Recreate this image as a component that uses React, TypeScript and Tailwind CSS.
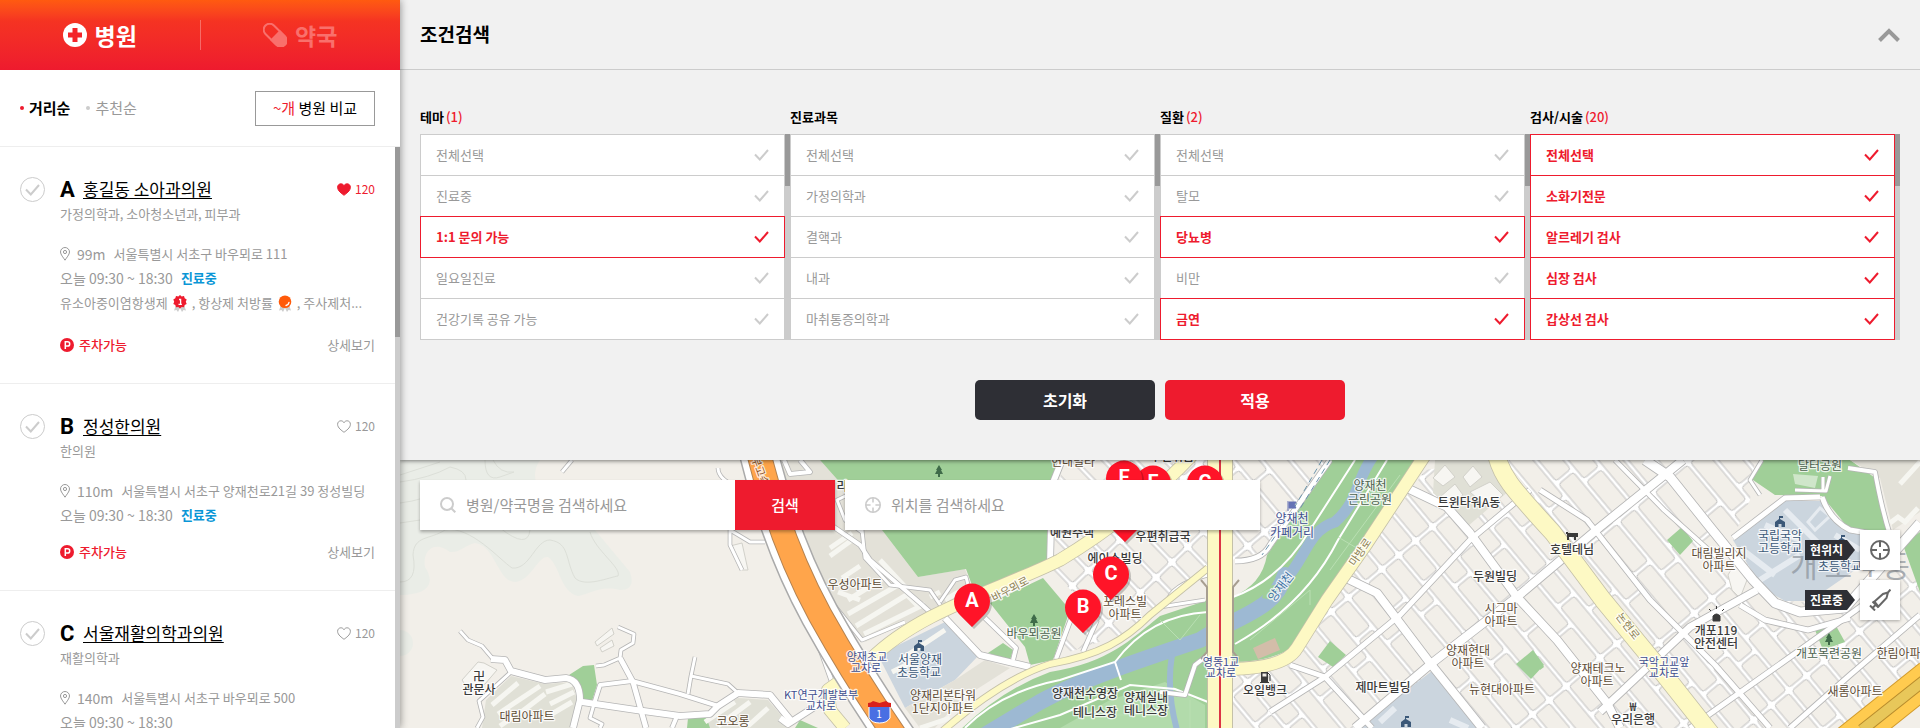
import { useState } from 'react';
import type { ReactNode } from 'react';

type Hospital = {
  letter: string;
  name: string;
  departments: string;
  distance: string;
  address: string;
  open: boolean;
  liked: boolean;
  awards: boolean;
};

const hospitals: Hospital[] = [
  { letter: 'A', name: '홍길동 소아과의원', departments: '가정의학과, 소아청소년과, 피부과', distance: '99m', address: '서울특별시 서초구 바우뫼로 111', open: true, liked: true, awards: true },
  { letter: 'B', name: '정성한의원', departments: '한의원', distance: '110m', address: '서울특별시 서초구 양재천로21길 39 정성빌딩', open: true, liked: false, awards: false },
  { letter: 'C', name: '서울재활의학과의원', departments: '재활의학과', distance: '140m', address: '서울특별시 서초구 바우뫼로 500', open: false, liked: false, awards: false },
];

type Filter = { title: string; count?: number; options: string[]; selected: number[] };

const filters: Filter[] = [
  { title: '테마', count: 1, options: ['전체선택', '진료중', '1:1 문의 가능', '일요일진료', '건강기록 공유 가능'], selected: [2] },
  { title: '진료과목', options: ['전체선택', '가정의학과', '결핵과', '내과', '마취통증의학과'], selected: [] },
  { title: '질환', count: 2, options: ['전체선택', '탈모', '당뇨병', '비만', '금연'], selected: [2, 4] },
  { title: '검사/시술', count: 20, options: ['전체선택', '소화기전문', '알르레기 검사', '심장 검사', '갑상선 검사'], selected: [0, 1, 2, 3, 4] },
];

function Check({ className }: { className: string }) {
  return (
    <svg viewBox="0 0 15 12" className={className} fill="none" stroke="currentColor" strokeWidth="2" aria-hidden="true">
      <path d="M1 5.5 5.8 10.5 14 1" />
    </svg>
  );
}

function Target({ className }: { className: string }) {
  return (
    <svg viewBox="0 0 20 20" className={className} fill="none" stroke="currentColor" strokeWidth="2" aria-hidden="true">
      <circle cx="10" cy="10" r="9" />
      <path d="M10 1v6M10 13v6M1 10h6M13 10h6" />
    </svg>
  );
}

function Heart({ filled }: { filled: boolean }) {
  return (
    <svg viewBox="0 0 14 13" className="h-[13px] w-[14px]" fill={filled ? 'currentColor' : 'none'} stroke="currentColor" strokeWidth="1" aria-hidden="true">
      <path d="M7 12.3C5 10.700 .6 8 .6 4.300.6 2.200 2.100.8 3.900.8 5.200.8 6.400 1.500 7 2.700 7.600 1.500 8.800.8 10.100.8c1.800 0 3.300 1.400 3.300 3.500C13.400 8 9 10.700 7 12.300Z" />
    </svg>
  );
}

function GoldMedal() {
  return (
    <svg viewBox="0 0 14 17" className="h-[17px] w-[14px]" aria-hidden="true">
      <path d="M3 10 1 15.500l2.500-.5L5 17l2-4 2 4 1.500-2 2.500.5L11 10Z" fill="#ccc" />
      <path d="m7 0 1.700 1.500 2.300-.4.7 2.200 2 1.200-.9 2.200.9 2.200-2 1.200-.7 2.200-2.300-.4L7 13.400l-1.700-1.500-2.300.4-.7-2.200-2-1.200.9-2.200-.9-2.200 2-1.200.7-2.200 2.300.4Z" fill="#ee1b2e" />
      <path d="M6 4.500h1.600v4.300M5.500 9.300h3.400" stroke="#fff" strokeWidth="1.300" fill="none" />
    </svg>
  );
}

function BronzeMedal() {
  return (
    <svg viewBox="0 0 14 17" className="h-[17px] w-[14px]" aria-hidden="true">
      <path d="M3 10 1 15.500l2.500-.5L5 17l2-4 2 4 1.500-2 2.500.5L11 10Z" fill="#ccc" />
      <circle cx="7" cy="6.800" r="6.300" fill="#ff5a0a" />
      <path d="M11 7.500c-.3 1.500-1.400 2.700-3 3" stroke="#fff" strokeWidth="1.300" fill="none" strokeLinecap="round" />
    </svg>
  );
}

function HospitalItem({ item }: { item: Hospital }) {
  return (
    <li className="flex border-b border-[#eee] pt-[27px] pr-5 pb-7 pl-5">
      <label className="relative mt-[3px] flex h-[25px] w-[25px] shrink-0 items-center justify-center rounded-full border border-[#ccc] text-[#ccc]">
        <input type="checkbox" aria-label={`${item.name} 선택`} className="absolute inset-0 cursor-pointer appearance-none rounded-full" />
        <Check className="h-[12px] w-[15px]" />
      </label>
      <div className="ml-[15px] min-w-0 flex-1 text-[13px] whitespace-nowrap text-[#999]">
        <div className="flex h-[30px] items-center">
          <span className="w-[23px] font-['Roboto','Noto_Sans_CJK_KR',sans-serif] text-[22px] font-bold text-black">{item.letter}</span>
          <a href="#detail" className="text-[17px] text-black underline decoration-1 underline-offset-2">{item.name}</a>
          <button type="button" className={`ml-auto flex items-center gap-1 text-[12px] ${item.liked ? 'text-[#ee1b2e]' : 'text-[#999]'}`}>
            <Heart filled={item.liked} />120
          </button>
        </div>
        <p className="h-[38px] leading-5">{item.departments}</p>
        <p className="flex h-6 items-center">
          <svg viewBox="0 0 10 14" className="mr-[7px] h-[14px] w-[10px] shrink-0" fill="none" stroke="#999" aria-hidden="true">
            <path d="M5 13.200C3.500 10.800.5 7.500.5 5a4.500 4.500 0 0 1 9 0c0 2.500-3 5.800-4.500 8.200Z" />
            <circle cx="5" cy="5" r="1.600" />
          </svg>
          <span className="text-[14px]">{item.distance}</span>
          <span className="ml-2">{item.address}</span>
        </p>
        <p className="flex h-6 items-center">
          <span className="text-[14px]">오늘 09:30 ~ 18:30</span>
          {item.open && <strong className="ml-2 font-bold text-[#0a96d6]">진료중</strong>}
        </p>
        {item.awards && (
          <p className="flex h-[30px] items-center pb-1">
            유소아중이염항생제<span className="mx-[5px]"><GoldMedal /></span>, 항상제 처방률<span className="mx-[5px]"><BronzeMedal /></span>, 주사제처...
          </p>
        )}
        {item.open && (
          <div className="mt-[15px] flex h-5 items-center">
            <svg viewBox="0 0 14 14" className="mr-[5px] h-[14px] w-[14px]" aria-hidden="true">
              <circle cx="7" cy="7" r="7" fill="#ee1b2e" />
              <path d="M5.300 11V3.800h2.300a2 2 0 0 1 0 4.200H5.300" fill="none" stroke="#fff" strokeWidth="1.500" />
            </svg>
            <span className="font-medium text-[#ee1b2e]">주차가능</span>
            <a href="#detail" className="ml-auto">상세보기</a>
          </div>
        )}
      </div>
    </li>
  );
}

function Sidebar() {
  return (
    <aside className="relative z-20 flex w-[400px] shrink-0 flex-col bg-white shadow-[0_0_8px_rgba(0,0,0,0.45)]">
      <nav className="flex h-[70px] shrink-0 items-center bg-linear-to-b from-[#ff5a10] via-[#f53322] via-30% to-[#ee1a2e] text-[23px] leading-8 font-bold">
        <a href="#hospital" className="flex flex-1 items-center justify-center gap-2 text-white">
          <svg viewBox="0 0 24 24" className="h-6 w-6" aria-hidden="true">
            <circle cx="12" cy="12" r="12" fill="#fff" />
            <path d="M9.500 5h5v4.500H19v5h-4.500V19h-5v-4.500H5v-5h4.500Z" fill="#f3242a" />
          </svg>
          병원
        </a>
        <span className="h-[30px] w-px bg-white/30" />
        <a href="#pharmacy" className="flex flex-1 items-center justify-center gap-2 text-[#f9706c]">
          <svg viewBox="0 0 24 24" className="h-6 w-6" aria-hidden="true">
            <g transform="rotate(45 12 12)">
              <rect x="-1.500" y="6" width="27" height="12" rx="6" fill="none" stroke="#f9706c" strokeWidth="2" />
              <path d="M12 5h8a7 7 0 0 1 0 14h-8Z" fill="#f9706c" />
            </g>
          </svg>
          약국
        </a>
      </nav>
      <div className="flex h-[77px] shrink-0 items-center border-b border-[#eee] pr-[25px] pl-5 text-[15px]">
        <button type="button" className="flex items-center gap-[5px] font-bold text-black"><i className="h-1 w-1 rounded-full bg-[#ee1b2e]" />거리순</button>
        <button type="button" className="ml-4 flex items-center gap-[5px] text-[#999]"><i className="h-1 w-1 rounded-full bg-[#ccc]" />추천순</button>
        <button type="button" className="ml-auto h-[35px] w-[120px] border border-[#999] text-black"><span className="text-[#ee1b2e]">~개</span> 병원 비교</button>
      </div>
      <div className="flex min-h-0 flex-1">
        <ul className="min-w-0 flex-1 overflow-hidden">
          {hospitals.map((h) => <HospitalItem key={h.letter} item={h} />)}
        </ul>
        <div className="w-[5px] bg-[#ccc]"><div className="h-[190px] bg-[#999]" /></div>
      </div>
    </aside>
  );
}

function FilterColumn({ filter }: { filter: Filter }) {
  const [selected, setSelected] = useState(filter.selected);
  const toggle = (i: number) => setSelected((s) => (s.includes(i) ? s.filter((n) => n !== i) : [...s, i]));
  return (
    <fieldset className="min-w-0 flex-1">
      <legend className="mb-2 flex h-[19px] gap-[2px] text-[13px] leading-[19px] font-bold text-black">
        {filter.title}{filter.count && <span className="font-medium text-[#ee1b2e]">({filter.count})</span>}
      </legend>
      <div className="flex">
        <div className="flex-1 pt-px">
          {filter.options.map((option, i) => {
            const on = selected.includes(i);
            return (
              <label key={option} className={`relative -mt-px flex h-[42px] cursor-pointer items-center justify-between border bg-white px-[15px] text-[13px] ${on ? 'z-10 border-[#ee1b2e] font-bold text-[#ee1b2e]' : 'border-[#ccc] text-[#999]'}`}>
                <input type="checkbox" checked={on} onChange={() => toggle(i)} className="sr-only" />
                {option}
                <Check className={`h-[12px] w-[15px] ${on ? 'text-[#ee1b2e]' : 'text-[#ccc]'}`} />
              </label>
            );
          })}
        </div>
        <div className="w-[5px] bg-[#ccc]"><div className="h-[52px] bg-[#999]" /></div>
      </div>
    </fieldset>
  );
}

function ConditionPanel() {
  return (
    <section className="relative z-10 shrink-0 bg-[#f1f1f1] shadow-[0_1px_4px_rgba(0,0,0,0.5)]">
      <header className="flex h-[70px] items-center justify-between border-b border-[#ccc] px-5">
        <h1 className="text-[19px] font-bold text-black">조건검색</h1>
        <button type="button" aria-label="접기">
          <svg viewBox="0 0 22 14" className="h-[14px] w-[22px]" fill="none" stroke="#999" strokeWidth="4" aria-hidden="true"><path d="M1.500 12.500 11 3l9.500 9.500" /></svg>
        </button>
      </header>
      <div className="flex px-5 pt-[37px]">
        {filters.map((f) => <FilterColumn key={f.title} filter={f} />)}
      </div>
      <div className="flex justify-center gap-[10px] pt-10 pb-10 text-[16px] font-bold text-white">
        <button type="reset" className="h-10 w-[180px] rounded-[5px] bg-[#2e2f35]">초기화</button>
        <button type="submit" className="h-10 w-[180px] rounded-[5px] bg-[#ee1b2e]">적용</button>
      </div>
    </section>
  );
}

const streets: [string, number][] = [
  ['M460 631 468 640 482 646 493 659', 3],
  ['M491 659 505 660 511 671 545 680 566 678Q580 680 580 700L573 728', 6],
  ['M511 672 479 701 483 717 477 728', 3],
  ['M596 666 604 665 620 658 621 650 633 643 634 634 618 627', 3],
  ['M620 658 633 682 646 728', 5],
  ['M594 704 600 685 632 681 680 694 718 706', 4],
  ['M582 702 636 710 680 716 710 714 718 706 738 693 770 695 792 722', 6],
  ['M688 694 691 676 695 657', 3],
  ['M691 676 728 684 738 693', 3],
  ['M594 704 590 718 602 724 600 728', 3],
  ['M677 716 672 728', 4],
  ['M572 460 562 472', 3],
  ['M718 468Q718 480 740 488M730 530 750 542 765 542M730 530 730 545 742 570', 3],
  ['M780 560 810 620 832 682 832 692', 4],
  ['M780 718 788 724 830 697', 6],
  ['M800 460 810 472 790 474 784 460M780 490 860 545 870 560 920 603 930 612', 4],
  ['M862 530 865 558 890 585 930 590 945 612', 3],
  ['M862 532 845 520 837 500 858 490', 3],
  ['M830 600 862 640 905 622', 3],
  ['M940 602 955 580 966 577 972 600', 3],
  ['M1062 460 1052 485 1050 565', 6],
  ['M945 618 980 655 1030 667', 6],
  ['M985 618 1016 648 1013 660', 4],
  ['M1056 659 1078 600M1083 652 1097 620', 4],
  ['M1235 561Q1262 561 1270 545L1330 460', 5],
  ['M1160 607 1205 600M1167 603Q1170 585 1208 575', 3],
  ['M1160 692 1185 695 1195 665 1208 655', 4],
  ['M1409 489 1447 507 1470 533 1517 597 1557 640 1607 703 1620 728', 8],
  ['M1348 579 1377 593 1430 663 1482 728', 8],
  ['M1355 728 1432 663 1517 597 1600 527 1667 473 1683 460', 8],
  ['M1645 460 1670 477 1710 527 1753 580 1775 603 1800 612 1845 608 1920 523', 9],
  ['M1600 712 1690 627 1757 590', 7],
  ['M1540 490 1587 520 1650 600 1715 665 1770 728', 5],
  ['M1615 460 1664 510 1720 560', 4],
  ['M1290 665 1325 677 1372 728', 5],
  ['M1270 712 1325 677 1400 615 1470 540 1530 490', 5],
  ['M1690 728 1800 650 1870 600', 5],
  ['M1790 728 1850 675 1920 615', 5],
  ['M1820 497 1785 498 1733 538', 5],
  ['M1822 497Q1830 520 1850 530L1890 537', 5],
  ['M1760 495 1750 480 1762 460', 3],
  ['M1848 468 1875 472Q1882 510 1890 535', 4],
  ['M1795 490 1826 491 1830 476M1823 477V490', 3],
  ['M1740 605 1765 620 1808 630 1850 618', 5],
];

const avenues: [string, number][] = [
  ['M1195 452C1160 490 1110 530 1060 560 1000 590 920 610 870 660L828 690 830 710 845 728', 12],
  ['M938 735Q1000 680 1050 664C1100 655 1125 640 1150 615L1208 568', 6],
  ['M1427 452 1367 543 1327 600 1297 648Q1285 668 1232 669', 12],
  ['M1496 452C1500 475 1512 488 1553 533L1603 600 1663 673 1712 735', 17],
];

type Label = [string, number, number, string, number?, number?];
const ink = '#3a3a3a';
const brown = '#5e4c35';
const blue = '#3f4f8f';
const navy = '#3b5878';
const park = '#4d6350';

const labels: Label[] = [
  ['卍', 479, 677, ink], ['관문사', 479, 690, ink], ['대림아파트', 527, 717, brown], ['코오롱', 733, 722, brown],
  ['KT연구개발본부', 821, 695, blue, 11], ['교차로', 821, 706, blue, 11], ['우성아파트', 855, 585, brown],
  ['양재초교', 867, 657, blue, 11], ['교차로', 866, 668, blue, 11], ['서울양재', 920, 660, navy], ['초등학교', 919, 673, navy],
  ['양재리본타워', 943, 696, brown], ['1단지아파트', 943, 709, brown], ['바우뫼공원', 1034, 634, park],
  ['현대빌라', 1073, 462, brown], ['우편취급', 1172, 457, ink], ['예원주택', 1072, 533, ink], ['우편취급국', 1163, 537, ink], ['에이스빌딩', 1115, 559, ink],
  ['포레스빌', 1125, 602, brown], ['아파트', 1125, 615, brown], ['양재천수영장', 1085, 694, ink], ['테니스장', 1095, 713, ink],
  ['양재실내', 1146, 698, ink], ['테니스장', 1146, 711, ink], ['영동1교', 1221, 662, blue, 11], ['교차로', 1221, 673, blue, 11],
  ['오일뱅크', 1265, 691, ink], ['양재천', 1370, 486, park], ['근린공원', 1370, 500, park], ['양재천', 1292, 519, blue], ['카페거리', 1292, 533, blue],
  ['양재천', 1281, 587, '#3f73a4', 12, -52], ['마방로', 1360, 552, '#8d8152', 11, -56], ['바우뫼로', 1010, 589, '#8d8152', 11, -28],
  ['트윈타워A동', 1469, 503, ink], ['두원빌딩', 1495, 577, ink], ['시그마', 1501, 609, brown], ['아파트', 1501, 622, brown],
  ['양재현대', 1468, 651, brown], ['아파트', 1468, 664, brown], ['뉴현대아파트', 1502, 690, brown], ['제마트빌딩', 1383, 688, ink],
  ['호텔데님', 1572, 550, ink], ['대림빌리지', 1719, 554, brown], ['아파트', 1719, 567, brown], ['국립국악', 1780, 536, navy], ['고등학교', 1780, 549, navy],
  ['달터공원', 1820, 466, park], ['개포119', 1716, 631, ink], ['안전센터', 1716, 644, ink], ['국악고교앞', 1664, 662, blue, 11], ['교차로', 1664, 673, blue, 11],
  ['양재테크노', 1598, 669, brown], ['아파트', 1597, 682, brown], ['우리은행', 1633, 720, ink], ['₩', 1633, 707, ink],
  ['개포목련공원', 1829, 654, park], ['한림아파트', 1904, 654, brown], ['새롬아파트', 1855, 692, brown], ['초등학교', 1840, 567, navy],
  ['논현로', 1628, 626, '#8d8152', 11, 52], ['경부고속도로', 762, 476, '#8a4d1c', 11, 70], ['리', 842, 487, ink],
];

const pins: [string, number, number][] = [
  ['D', 1125, 516], ['F', 1153, 483], ['E', 1124, 478], ['G', 1205, 483], ['A', 972, 601], ['C', 1111, 574], ['B', 1083, 607],
];

const apartments = [
  'M492 705 518 683M498 714 540 686M516 716 545 694M546 692 572 684M550 704 574 692M545 718 572 702M500 726 514 716',
  'M705 722 735 702M718 726 750 702M748 726 768 708',
  'M830 556 852 540M830 548 852 533M842 578 860 566M838 592 860 600M848 600 890 574M848 614 900 584M856 626 908 594M864 634 925 604M880 560 908 590M906 594 918 606M962 590 945 600M930 597 940 592',
  'M900 660 945 630M892 672 912 662',
  'M920 728 950 718M940 690 965 700M960 690 978 705',
];

function Tree({ x, y }: { x: number; y: number }) {
  return <path transform={`translate(${x} ${y})`} d="M0-6 3-1H2L4 3H1V6H-1V3H-4L-2-1H-3Z" fill="#3f6b49" />;
}

function School({ x, y }: { x: number; y: number }) {
  return <path transform={`translate(${x} ${y})`} d="M-5 5V0L-1-3V-6H3V-4H0V-3L5 0V5H1.500V2H-1.500V5Z" fill={navy} />;
}

function MapCanvas() {
  return (
    <svg viewBox="400 460 1520 268" preserveAspectRatio="xMinYMin slice" className="absolute inset-0 h-full w-full" role="img" aria-label="지도">
      <defs>
        <pattern id="blocksEast" width="104" height="44" patternUnits="userSpaceOnUse" patternTransform="translate(1432 663) rotate(50)">
          <rect width="104" height="44" fill="#fff" />
          <g fill="#f2efe9" stroke="#c2c2c2">
            <rect x="2" y="2" width="56" height="18" rx="3" />
            <rect x="62" y="2" width="40" height="18" rx="3" />
            <rect x="2" y="24" width="34" height="18" rx="3" />
            <rect x="40" y="24" width="62" height="18" rx="3" />
          </g>
        </pattern>
        <pattern id="blocksFar" width="120" height="46" patternUnits="userSpaceOnUse" patternTransform="translate(1670 477) rotate(50)">
          <rect width="120" height="46" fill="#fff" />
          <g fill="#f2efe9" stroke="#c2c2c2">
            <rect x="2" y="2" width="64" height="19" rx="3" />
            <rect x="70" y="2" width="48" height="19" rx="3" />
            <rect x="2" y="25" width="48" height="19" rx="3" />
            <rect x="54" y="25" width="64" height="19" rx="3" />
          </g>
        </pattern>
        <pattern id="blocksWest" width="52" height="22" patternUnits="userSpaceOnUse" patternTransform="translate(1120 540) rotate(46)">
          <rect width="52" height="22" fill="#fff" />
          <rect x="2" y="2" width="48" height="18" rx="3" fill="#f2efe9" stroke="#c2c2c2" />
        </pattern>
      </defs>
      <rect x="400" y="460" width="1520" height="268" fill="#f2efe9" />
      <path d="M400 460H540Q530 475 540 490L595 530 630 572Q636 590 620 590C600 585 590 594 578 596 560 592 560 565 548 557 538 555 532 580 515 582 498 582 495 545 475 543 465 545 460 553 450 552 435 540 422 550 425 567 435 582 430 595 400 595Z" fill="#eaede7" />
      <circle cx="400" cy="643" r="13" fill="#eaede7" />
      <g fill="none" stroke="#dcdfd8">
        <path d="M400 475 440 462M400 482Q430 478 450 467 466 470 466 480M400 523 420 520M400 503Q425 500 440 490M485 460Q485 482 500 477L514 472M493 460Q500 474 514 472M400 582Q418 582 413 555C414 535 430 540 445 530 470 525 500 560 512 568 530 570 535 540 550 540 570 543 565 560 575 578 585 588 610 577 618 576 622 568 595 550 590 532" />
        <path d="M500 528Q528 550 530 530" />
      </g>

      <path d="M1232 460H1330L1268 550 1232 560ZM1425 470 1495 460 1600 600 1700 728H1232V675L1290 665 1345 585Z" fill="url(#blocksEast)" />
      <path d="M1505 460H1755L1750 500 1733 538 1770 600 1850 605 1920 540V670L1850 728H1715Z" fill="url(#blocksFar)" />
      <path d="M1062 460H1208V568L1120 635 1060 655 1080 600 1052 570Z" fill="url(#blocksWest)" />

      <path d="M760 460H820L882 530 918 577 965 569 975 595 940 608 865 642 832 600 800 540Z" fill="#e3e1d8" />
      <path d="M820 460H1060L1050 485V562L1020 575 976 596 966 569 918 577 882 530Z" fill="#a0cf98" />
      <path d="M990 603 1043 578 1070 610 1053 660 1030 665 1025 647Z" fill="#a0cf98" />
      <path d="M988 653 1003 643 1013 650 1010 660Z" fill="#a0cf98" />
      <path d="M569 675 583 666 594 665 597 685 592 701 582 700 579 686Z" fill="#a0cf98" />
      <path d="M511 676 545 684 572 682 577 700 570 728H482L486 700Z" fill="#e0e0d6" />
      <path d="M690 728 738 698 768 700 787 722V728Z" fill="#e0e0d6" />
      <path d="M688 718 706 716 710 728H687ZM795 728 800 720 818 728Z" fill="#a0cf98" />
      <path d="M945 622 980 654 955 680 905 708 878 655Z" fill="#cbd5de" />
      <path d="M905 708 955 680 985 660 1010 668 960 700 935 728H920Z" fill="#e3e1d8" />
      <path d="M955 735Q1000 690 1050 672C1110 662 1130 640 1160 616L1208 600V735Z" fill="#a0cf98" />
      <path d="M1332 460H1417L1343 580 1293 647Q1270 662 1232 662V597Q1262 585 1267 555Z" fill="#a0cf98" />
      <path d="M1110 700 1165 682 1205 705V728H1060Z" fill="#b2dbab" />
      <g fill="none" stroke="#9db9d3" strokeLinecap="round" strokeLinejoin="round">
        <path d="M1374 455C1355 480 1360 500 1335 522 1308 530 1305 560 1285 580" strokeWidth="11" />
        <path d="M1285 575C1275 610 1240 615 1200 640 1140 660 1080 680 1040 702L985 735" strokeWidth="16" />
        <path d="M1172 655Q1166 690 1177 730" strokeWidth="6" />
      </g>
      <path d="M1262 598Q1265 583 1280 585L1272 600Z" fill="#a0cf98" />
      <g fill="none" stroke="#fff" strokeWidth="2">
        <path d="M1355 460 1310 530Q1280 580 1233 597M1387 460 1338 540Q1305 605 1235 644" />
        <path d="M965 728Q1000 692 1060 680L1115 662Q1150 615 1208 612M1115 662 1121 680M1000 732 1060 715 1130 685 1175 689 1208 702" />
      </g>
      <path d="M1253 648 1275 638 1280 650 1258 659Z" fill="#d3bda9" />
      <g fill="none" stroke="#b9dfb2">
        <path d="M1400 475 1330 570M1338 537 1360 550M1310 605V590L1250 640M1160 620 1180 640 1200 615M1080 715H1160M1190 700V728" />
      </g>

      <path d="M1435 460H1490L1510 490 1468 526 1447 505 1433 493Z" fill="#e0e0d6" />
      <g fill="#f7f6f2" stroke="#d2d1ca">
        <path d="m1433 478 12-13 10 12-12 9ZM1463 477 1473 466 1482 477 1470 487ZM1470 492 1490 482 1503 495 1488 508ZM1440 497 1455 484 1463 495 1449 505Z" />
        <path d="M462 680 478 662 484 663 497 670 485 684 470 692ZM595 642 612 628 614 634 597 646ZM600 648 612 640 614 646 602 652ZM730 546 742 543 748 570 742 570Z" />
        <path d="M1728 575 1735 563 1747 580 1740 598 1732 590Z" />
      </g>
      <path d="M1357 728 1432 671 1478 728Z" fill="#cbd5de" />
      <path d="M1733 540 1785 501H1823L1833 520 1850 533 1890 540 1855 570 1810 601H1785L1762 588Z" fill="#cbd5de" />
      <path d="M1762 460H1850L1878 480 1890 540 1850 530 1822 496 1775 495 1750 478Z" fill="#a0cf98" />
      <path d="M1850 460H1920V512L1893 530 1880 478Z" fill="#e3e1d8" />
      <path d="M1903 545 1920 532V592ZM1667 540 1682 527 1693 541 1680 555ZM1318 657 1330 641 1346 655 1333 667ZM1516 664 1533 650 1544 665 1531 679ZM1815 630 1835 624 1845 642 1823 650ZM1540 660 1544 667 1540 670Z" fill="#a0cf98" />
      <path d="M1793 474 1818 476 1815 488 1795 484Z" fill="#cfe6ca" />
      <g fill="none" stroke="#e6ebf0" strokeWidth="6">
        <path d="M1740 548 1775 575M1765 525 1800 540M1785 510 1820 545M1760 580 1800 555M1835 535 1860 550M1380 722 1395 708M1450 720 1468 728" />
        <path d="M1808 522 1820 508 1830 516 1815 530Z" strokeWidth="3" />
      </g>
      <g fill="none" stroke="#f6f6f1" strokeWidth="5">
        {apartments.map((d) => <path key={d} d={d} />)}
        <path d="M1890 523 1898 517 1905 522 1918 508M1900 484 1920 462" />
      </g>

      <g fill="none" strokeLinejoin="round">
        {streets.map(([d, w]) => <path key={d} d={d} stroke="#b5b5b5" strokeWidth={w + 1.600} />)}
        {streets.map(([d, w]) => <path key={d} d={d} stroke="#fff" strokeWidth={w} />)}
        {avenues.map(([d, w]) => <path key={d} d={d} stroke="#c4c0a8" strokeWidth={w + 1.600} />)}
        {avenues.map(([d, w]) => <path key={d} d={d} stroke="#fdf9c4" strokeWidth={w} />)}
        <path d="M1322 460 1290 515 1262 555M1330 460 1298 512" stroke="#6d96ad" strokeDasharray="6 4" />
        <path d="M758 450C770 500 790 560 820 615 845 660 870 700 898 740" stroke="#aaa" strokeWidth="40" />
        <path d="M758 450C770 500 790 560 820 615 845 660 870 700 898 740" stroke="#fff" strokeWidth="37" />
        <path d="M758 450C770 500 790 560 820 615 845 660 870 700 898 740" stroke="#b48352" strokeWidth="25" />
        <path d="M758 450C770 500 790 560 820 615 845 660 870 700 898 740" stroke="#ffa54b" strokeWidth="23" />
        <path d="M1835 752 1930 676" stroke="#d19a2c" strokeWidth="34" />
        <path d="M1835 752 1930 676" stroke="#ffcb4f" strokeWidth="32" />
        <path d="M1862 730 1930 676" stroke="#b78b2c" strokeWidth="12" />
        <path d="M1862 730 1930 676" stroke="#e8c75a" strokeWidth="10" />
      </g>
      <rect x="1207" y="460" width="26" height="268" fill="#c4c0a8" />
      <rect x="1208" y="460" width="24" height="268" fill="#fdf9c4" />
      <path d="M1220 460V728" stroke="#dc3545" strokeWidth="2" />
      <path d="M1201 580 1207 587V652L1201 659M1239 580 1233 587V652L1239 659" fill="none" stroke="#a79e90" strokeWidth="2" />

      <Tree x={939} y={471} /><Tree x={1034} y={620} /><Tree x={1829} y={639} />
      <School x={919} y={646} /><School x={1780} y={522} /><School x={1406} y={722} /><School x={1842} y={541} />
      <path fillRule="evenodd" d="M1261 672h7v10h1v1h-9v-1h1ZM1262.500 673.500v3h4v-3Z" fill={ink} />
      <path d="M1268 673l2 2v6" fill="none" stroke={ink} />
      <path d="M1566 532h2v1h10v4h-2v3h-2v-3h-5v3h-2v-6h-1Z" fill={ink} />
      <path d="M1288 501v10M1289 502h7l-2 3 2 3h-7Z" fill="#6673b5" stroke="#6673b5" />
      <path d="M1713 621v-5q3.500-4 7 0v5ZM1711 611l-2-2M1722 611l2-2M1716.500 609v-3" fill={ink} stroke={ink} />
      <g>
        <path d="M869 706h21v12q-3 5-10.500 5t-10.500-5Z" fill="#4a6fe3" stroke="#fff" />
        <path d="M868 707v-4q3 0 5-2l6.500 2 6.500-2q2 2 5 2v4Z" fill="#d8201c" />
        <text x="879" y="718" textAnchor="middle" fontSize="10" fill="#fff">1</text>
      </g>
      <text x="1850" y="577" textAnchor="middle" fontSize="30" fill="#7f868f" fillOpacity=".6">개 포 4 동</text>
      <g textAnchor="middle" fontWeight="400" stroke="#fff" strokeOpacity=".8" strokeWidth="2.500" paintOrder="stroke" strokeLinejoin="round">
        {labels.map(([text, x, y, color, size, angle], i) => (
          <text key={i} x={x} y={y + 4} fill={color} fontSize={size ?? 12} fontWeight={color === ink ? 500 : 400} transform={angle ? `rotate(${angle} ${x} ${y})` : undefined}>{text}</text>
        ))}
      </g>
      {pins.map(([letter, x, y]) => (
        <g key={letter} transform={`translate(${x} ${y})`}>
          <path d="M1 27-12 14A18 18 0 1 1 14 14Z" fill="#000" fillOpacity=".2" transform="translate(1 1)" />
          <path d="M0 26-13 13A18 18 0 1 1 13 13Z" fill="#ff1428" />
          <text y="6" textAnchor="middle" fontSize="20" fontWeight="700" fill="#fff" fontFamily="Roboto, Noto Sans CJK KR, sans-serif">{letter}</text>
        </g>
      ))}
    </svg>
  );
}

function MapTool({ label, children }: { label: string; children: ReactNode }) {
  return (
    <div className="flex items-center gap-[5px]">
      <span className="flex h-5 w-[50px] items-center bg-[#2e2f35] pl-[5px] text-[12px] font-bold text-white [clip-path:polygon(0_0,84%_0,100%_50%,84%_100%,0_100%)]">{label}</span>
      <button type="button" aria-label={label} className="flex h-10 w-10 items-center justify-center bg-white text-[#666] shadow-[0_1px_3px_rgba(0,0,0,0.3)]">{children}</button>
    </div>
  );
}

function MapArea() {
  return (
    <section className="relative min-h-0 flex-1 overflow-hidden">
      <MapCanvas />
      <form className="absolute top-5 left-5 flex gap-[10px] text-[15px]" onSubmit={(e) => e.preventDefault()}>
        <div className="flex h-[50px] bg-white shadow-[0_2px_3px_rgba(0,0,0,0.3)]">
          <label className="flex w-[315px] items-center gap-[10px] pl-5">
            <svg viewBox="0 0 16 16" className="h-4 w-4 shrink-0" fill="none" stroke="#ccc" strokeWidth="2" aria-hidden="true">
              <circle cx="7" cy="7" r="6" /><path d="m11.300 11.300 4 4" />
            </svg>
            <input type="text" aria-label="병원/약국명" placeholder="병원/약국명을 검색하세요" className="min-w-0 flex-1 outline-none placeholder:text-[#999]" />
          </label>
          <button type="submit" className="w-[100px] bg-[#ee1b2e] font-medium text-white">검색</button>
        </div>
        <label className="flex h-[50px] w-[415px] items-center gap-[10px] bg-white pl-5 text-[#ccc] shadow-[0_2px_3px_rgba(0,0,0,0.3)]">
          <Target className="h-4 w-4 shrink-0" />
          <input type="text" aria-label="위치" placeholder="위치를 검색하세요" className="min-w-0 flex-1 text-black outline-none placeholder:text-[#999]" />
        </label>
      </form>
      <div className="absolute top-[70px] right-5 flex flex-col gap-[10px]">
        <MapTool label="현위치"><Target className="h-5 w-5" /></MapTool>
        <MapTool label="진료중">
          <svg viewBox="0 0 22 22" className="h-[22px] w-[22px]" fill="none" stroke="currentColor" strokeWidth="2" aria-hidden="true">
            <path d="M5.500 12.500 14 5l5-1.500L17.500 9l-8 8.500ZM18.500 4 21.500.5M7.500 15 3 19.500M1 16.500 6 21.500M3.500 12.500l6 6" />
          </svg>
        </MapTool>
      </div>
    </section>
  );
}

export default function App() {
  return (
    <div className="flex h-screen overflow-hidden bg-white font-['Noto_Sans_CJK_KR',sans-serif]">
      <Sidebar />
      <main className="flex min-w-0 flex-1 flex-col">
        <ConditionPanel />
        <MapArea />
      </main>
    </div>
  );
}
